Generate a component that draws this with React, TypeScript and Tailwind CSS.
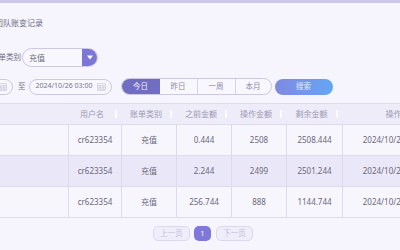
import React from "react";

const font = { fontFamily: '"Noto Sans", "Noto Sans CJK SC", sans-serif' };

function CalIcon() {
  return (
    <svg width="9" height="8" viewBox="0 0 9 8" fill="none" stroke="#cfcbe0" strokeWidth="0.8">
      <rect x="0.5" y="0.5" width="8" height="7" rx="0.5" />
      <line x1="0.5" y1="2.5" x2="8.5" y2="2.5" />
      <line x1="0.5" y1="4.3" x2="8.5" y2="4.3" />
      <line x1="0.5" y1="6" x2="8.5" y2="6" />
      <line x1="3" y1="2.5" x2="3" y2="7.5" />
      <line x1="6" y1="2.5" x2="6" y2="7.5" />
    </svg>
  );
}

const rows = [
  { u: "cr623354", t: "充值", b: "0.444", o: "2508", r: "2508.444", d: "2024/10/25 03:00:00" },
  { u: "cr623354", t: "充值", b: "2.244", o: "2499", r: "2501.244", d: "2024/10/25 03:00:00" },
  { u: "cr623354", t: "充值", b: "256.744", o: "888", r: "1144.744", d: "2024/10/25 03:00:00" },
];

const headers = ["", "用户名", "账单类别", "之前金额", "操作金额", "剩余金额", "操作时间"];

export default function App() {
  return (
    <div className="w-[400px] h-[250px] overflow-hidden bg-[#f6f4fd] text-[#5f5c70]" style={font}>
      <div className="h-[3px] bg-[#cdc8ea]" />
      {/* title */}
      <div className="h-[38px] flex items-center -ml-[5px] pt-[1px] text-[8px] text-[#6f6c82] whitespace-nowrap">团队账变记录</div>
      {/* select row */}
      <div className="h-[19px] mt-[7px] flex items-center -ml-[9px]">
        <span className="w-[29px] text-[7.5px] text-[#6f6c82] whitespace-nowrap">账单类别</span>
        <div className="ml-[2px] w-[76px] h-[19px] rounded-full border border-[#cdc7e4] bg-[#f8f7fd] flex items-center overflow-hidden">
          <span className="flex-1 pl-[6px] text-[8px] text-[#6f6c82]">充值</span>
          <div className="w-[15px] h-full bg-[#7c76d6] flex items-center justify-center">
            <svg width="6" height="5" viewBox="0 0 6 5">
              <polygon points="0,0.5 6,0.5 3,4.5" fill="#ffffff" />
            </svg>
          </div>
        </div>
      </div>
      {/* date row */}
      <div className="h-[17px] mt-[11px] flex items-center -ml-[70px]">
        <div className="w-[83px] h-[16px] rounded-full border border-[#cdc7e4] bg-[#f8f7fd] flex items-center justify-end pr-[5px]">
          <CalIcon />
        </div>
        <span className="ml-[5px] text-[7.5px] text-[#6f6c82]">至</span>
        <div className="ml-[3px] w-[83px] h-[16px] rounded-full border border-[#cdc7e4] bg-[#f8f7fd] flex items-center pl-[6px] pr-[5px]">
          <span className="flex-1 text-[7px] text-[#77748a] whitespace-nowrap">2024/10/26 03:00</span>
          <CalIcon />
        </div>
        <div className="ml-[9px] w-[151px] h-[17px] rounded-full border border-[#cdc7e4] bg-[#f8f7fd] flex overflow-hidden text-[7.5px]">
          <div className="w-[38px] bg-[#716dc0] text-[#f0effa] flex items-center justify-center">今日</div>
          <div className="w-[38px] border-r border-[#d6d2ea] text-[#8e8ba3] flex items-center justify-center">昨日</div>
          <div className="w-[38px] border-r border-[#d6d2ea] text-[#8e8ba3] flex items-center justify-center">一周</div>
          <div className="flex-1 text-[#8e8ba3] flex items-center justify-center">本月</div>
        </div>
        <div className="ml-[3px] w-[58px] h-[16px] rounded-full bg-gradient-to-r from-[#7f89e2] to-[#63a6f2] text-[#e6ecff] text-[7.5px] flex items-center justify-center">
          搜索
        </div>
      </div>
      {/* table */}
      <div className="mt-[8px] w-[460px]">
        <div className="grid grid-cols-[69px_53px_55px_55px_55px_56px_117px] h-[22px] bg-[#eeecf8] border-t border-b border-[#dedaee] text-[8px] text-[#9c99b4]">
          {headers.map((h, i) => (
            <div key={i} className="flex items-center">
              <span className="flex-1 text-center whitespace-nowrap">{h}</span>
              {i > 0 && i < 6 && <span className="w-[2px] h-[8px] bg-[#fbfaff] mr-[5px]" />}
            </div>
          ))}
        </div>
        {rows.map((r, i) => (
          <div
            key={i}
            className={`grid grid-cols-[69px_53px_55px_55px_55px_56px_117px] h-[31px] border-b border-[#dedaee] text-[8px] text-[#6a677c] ${
              i === 1 ? "bg-[#eae8f8]" : "bg-[#f7f6fd]"
            }`}
          >
            <div className="border-r border-[#dedaee]" />
            <div className="border-r border-[#dedaee] flex items-center justify-center">{r.u}</div>
            <div className="border-r border-[#dedaee] flex items-center justify-center">{r.t}</div>
            <div className="border-r border-[#dedaee] flex items-center justify-center">{r.b}</div>
            <div className="border-r border-[#dedaee] flex items-center justify-center">{r.o}</div>
            <div className="border-r border-[#dedaee] flex items-center justify-center">{r.r}</div>
            <div className="border-r border-[#dedaee] flex items-center justify-center whitespace-nowrap">{r.d}</div>
          </div>
        ))}
      </div>
      {/* pagination */}
      <div className="mt-[8px] flex items-center pl-[153px] text-[7.5px]">
        <div className="w-[37px] h-[15px] rounded-[5px] border border-[#dcd8f0] bg-[#efedf9] text-[#c4c0dc] flex items-center justify-center">上一页</div>
        <div className="ml-[4px] w-[17px] h-[15px] rounded-[5px] bg-[#7e78d8] text-white flex items-center justify-center">1</div>
        <div className="ml-[5px] w-[37px] h-[15px] rounded-[5px] border border-[#dcd8f0] bg-[#efedf9] text-[#c4c0dc] flex items-center justify-center">下一页</div>
      </div>
    </div>
  );
}
